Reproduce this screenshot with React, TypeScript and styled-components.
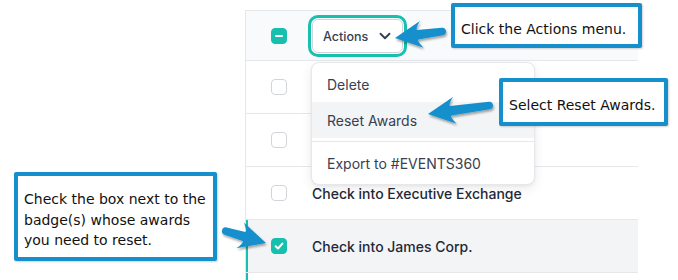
import React from "react";
import styled, { createGlobalStyle } from "styled-components";
import { ChevronDown } from "lucide-react";

const TEAL = "#17bfae";
const BLUE = "#1690cc";

const Global = createGlobalStyle`
  html, body { margin: 0; padding: 0; background: #ffffff; }
  body { font-family: Inter, "Noto Sans", sans-serif; -webkit-font-smoothing: antialiased; }
  * { box-sizing: border-box; }
`;

const Page = styled.div`
  position: relative;
  width: 678px;
  height: 280px;
  overflow: hidden;
  padding: 10px 40px 0 245px;
  display: flex;
`;

const Table = styled.div`
  flex: 1;
  display: flex;
  flex-direction: column;
  border-left: 1px solid #e5e7eb;
`;

const HeaderRow = styled.div`
  height: 51px;
  display: flex;
  align-items: center;
  gap: 25px;
  padding: 1px 0 0 25px;
  background: #f9fafb;
  border-top: 1px solid #e5e7eb;
  border-bottom: 1px solid #e5e7eb;
`;

const Row = styled.div<{ $selected?: boolean }>`
  height: 53px;
  display: flex;
  align-items: center;
  gap: 25px;
  padding-left: 25px;
  border-bottom: 1px solid #e5e7eb;
  background: ${(p) => (p.$selected ? "#f3f4f6" : "#ffffff")};
  box-shadow: ${(p) => (p.$selected ? `inset 2px 0 0 ${TEAL}` : "none")};
`;

const Filler = styled.div`
  flex: 1;
  box-shadow: inset 2px 0 0 ${TEAL};
`;

const RowLabel = styled.span`
  font-size: 14px;
  font-weight: 500;
  color: #1f2937;
  white-space: nowrap;
`;

const Box = styled.span<{ $on?: boolean }>`
  flex: none;
  width: 16px;
  height: 16px;
  border-radius: 4px;
  display: flex;
  align-items: center;
  justify-content: center;
  background: ${(p) => (p.$on ? TEAL : "#ffffff")};
  border: 1px solid ${(p) => (p.$on ? TEAL : "#d1d5db")};
`;

const Minus = styled.span`
  width: 8px;
  height: 2px;
  border-radius: 1px;
  background: #ffffff;
`;

const ActionsWrap = styled.div`
  position: relative;
`;

const ActionsButton = styled.button`
  height: 34px;
  display: flex;
  align-items: center;
  gap: 8px;
  padding: 0 8px 0 10px;
  background: #ffffff;
  border: 1px solid #d1d5db;
  border-radius: 6px;
  font-family: Inter, "Noto Sans", sans-serif;
  font-size: 12.5px;
  font-weight: 500;
  color: #374151;
  box-shadow: 0 0 0 1px #ffffff, 0 0 0 4px ${TEAL};
`;

const Menu = styled.div`
  position: absolute;
  left: -1px;
  top: calc(100% + 9px);
  width: 224px;
  padding: 3px 0 3px;
  background: #ffffff;
  border: 1px solid #e5e7eb;
  border-radius: 8px;
  box-shadow: 0 4px 12px rgba(0, 0, 0, 0.08), 0 1px 3px rgba(0, 0, 0, 0.05);
  z-index: 2;
`;

const MenuItem = styled.div<{ $active?: boolean }>`
  height: 36px;
  display: flex;
  align-items: center;
  padding-left: 15px;
  font-size: 14px;
  color: #374151;
  background: ${(p) => (p.$active ? "#f3f4f6" : "transparent")};
`;

const MenuDivider = styled.div`
  height: 1px;
  margin: 3px 0;
  background: #e5e7eb;
`;

const Callout = styled.div<{ $x: number; $y: number; $w: number; $h: number }>`
  position: absolute;
  left: ${(p) => p.$x}px;
  top: ${(p) => p.$y}px;
  width: ${(p) => p.$w}px;
  height: ${(p) => p.$h}px;
  display: flex;
  align-items: center;
  padding: 7px 2px 0 6px;
  background: #ffffff;
  border: 4px solid ${BLUE};
  border-radius: 2px;
  box-shadow: 1px 1px 2px rgba(0, 0, 0, 0.18);
  font-family: "DejaVu Sans", Verdana, sans-serif;
  font-size: 14px;
  line-height: 20.5px;
  color: #111111;
  white-space: nowrap;
  z-index: 3;
`;

const ArrowLayer = styled.svg`
  position: absolute;
  left: 0;
  top: 0;
  width: 678px;
  height: 280px;
  pointer-events: none;
  z-index: 4;
  overflow: visible;
`;

function arrowPath(tx: number, ty: number, px: number, py: number): string {
  const dx = tx - px;
  const dy = ty - py;
  const L = Math.hypot(dx, dy);
  const ux = dx / L;
  const uy = dy / L;
  const nx = -uy;
  const ny = ux;
  const P = (a: number, b: number) =>
    `${(px + a * ux + b * nx).toFixed(1)} ${(py + a * uy + b * ny).toFixed(1)}`;
  const barb = 27;
  const half = 13.5;
  const notch = 20;
  const sN = 4.8;
  const sT = 3.8;
  const end = L - sT;
  return [
    `M ${P(0, 0)}`,
    `L ${P(barb, -half)}`,
    `Q ${P(notch + 1, -sN - 1)} ${P(notch + 3, -sN)}`,
    `L ${P(end, -sT)}`,
    `C ${P(end + sT * 1.33, -sT)} ${P(end + sT * 1.33, sT)} ${P(end, sT)}`,
    `L ${P(notch + 3, sN)}`,
    `Q ${P(notch + 1, sN + 1)} ${P(barb, half)}`,
    "Z",
  ].join(" ");
}

const arrows = [
  { tail: [446, 31], tip: [395, 38] },
  { tail: [493, 105], tip: [428, 114] },
  { tail: [222, 230], tip: [266, 243] },
];

function Checkbox({ state }: { state: "off" | "on" | "mixed" }) {
  return (
    <Box $on={state !== "off"}>
      {state === "mixed" && <Minus />}
      {state === "on" && (
        <svg width="12" height="12" viewBox="0 0 12 12">
          <polyline
            points="2.6,6.3 5,8.5 9.4,3.6"
            fill="none"
            stroke="#ffffff"
            strokeWidth="2"
            strokeLinecap="round"
            strokeLinejoin="round"
          />
        </svg>
      )}
    </Box>
  );
}

const rows = [
  { id: 1, label: "", checked: false },
  { id: 2, label: "", checked: false },
  { id: 3, label: "Check into Executive Exchange", checked: false },
  { id: 4, label: "Check into James Corp.", checked: true },
];

export default function App() {
  return (
    <>
      <Global />
      <Page>
        <Table>
          <HeaderRow>
            <Checkbox state="mixed" />
            <ActionsWrap>
              <ActionsButton>
                Actions
                <ChevronDown size={18} strokeWidth={2.5} color="#374151" />
              </ActionsButton>
              <Menu>
                <MenuItem>Delete</MenuItem>
                <MenuItem $active>Reset Awards</MenuItem>
                <MenuDivider />
                <MenuItem>Export to #EVENTS360</MenuItem>
              </Menu>
            </ActionsWrap>
          </HeaderRow>
          {rows.map((r) => (
            <Row key={r.id} $selected={r.checked}>
              <Checkbox state={r.checked ? "on" : "off"} />
              {r.label && <RowLabel>{r.label}</RowLabel>}
            </Row>
          ))}
          <Filler />
        </Table>

        <Callout $x={451} $y={3} $w={191} $h={45}>
          Click the Actions menu.
        </Callout>
        <Callout $x={499} $y={78} $w={169} $h={48}>
          Select Reset Awards.
        </Callout>
        <Callout $x={14} $y={172} $w={203} $h={89}>
          <span>
            Check the box next to the
            <br />
            badge(s) whose awards
            <br />
            you need to reset.
          </span>
        </Callout>

        <ArrowLayer viewBox="0 0 678 280">
          <defs>
            <filter id="arrowShadow" x="-20%" y="-40%" width="140%" height="180%">
              <feDropShadow dx="1" dy="2" stdDeviation="1.2" floodColor="#000" floodOpacity="0.35" />
            </filter>
          </defs>
          {arrows.map((a, i) => (
            <path
              key={i}
              d={arrowPath(a.tail[0], a.tail[1], a.tip[0], a.tip[1])}
              fill={BLUE}
              filter="url(#arrowShadow)"
            />
          ))}
        </ArrowLayer>
      </Page>
    </>
  );
}
